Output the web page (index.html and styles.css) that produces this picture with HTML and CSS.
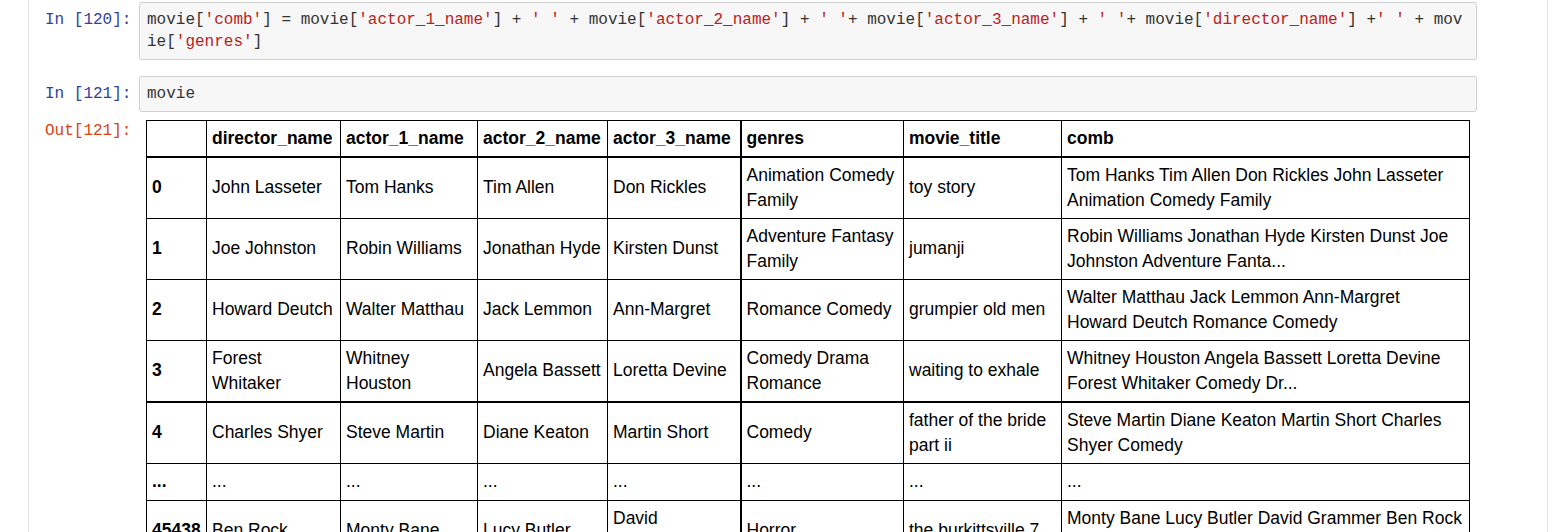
FILE: index.html
```html
<!DOCTYPE html>
<html>
<head>
<meta charset="utf-8">
<link rel="stylesheet" href="styles.css">
</head>
<body>
<div class="nb">
  <div class="cell">
    <div class="prompt prompt-in">In [120]:</div>
    <div class="input"><pre class="code">movie[<span class="str">'comb'</span>] = movie[<span class="str">'actor_1_name'</span>] + <span class="str">' '</span> + movie[<span class="str">'actor_2_name'</span>] + <span class="str">' '</span>+ movie[<span class="str">'actor_3_name'</span>] + <span class="str">' '</span>+ movie[<span class="str">'director_name'</span>] +<span class="str">' '</span> + mov
ie[<span class="str">'genres'</span>]</pre></div>
  </div>
  <div class="cell cell-gap">
    <div class="prompt prompt-in">In [121]:</div>
    <div class="input"><pre class="code">movie</pre></div>
  </div>
  <div class="cell cell-out">
    <div class="prompt prompt-out">Out[121]:</div>
    <div class="output">
      <table class="df">
        <colgroup>
          <col class="c-idx">
          <col class="c-dir">
          <col class="c-a1">
          <col class="c-a2">
          <col class="c-a3">
          <col class="c-gen">
          <col class="c-title">
          <col class="c-comb">
        </colgroup>
        <thead>
          <tr><th></th><th>director_name</th><th>actor_1_name</th><th>actor_2_name</th><th class="thick-r">actor_3_name</th><th>genres</th><th>movie_title</th><th>comb</th></tr>
        </thead>
        <tbody>
          <tr><th>0</th><td>John Lasseter</td><td>Tom Hanks</td><td>Tim Allen</td><td class="thick-r">Don Rickles</td><td>Animation Comedy<br>Family</td><td>toy story</td><td>Tom Hanks Tim Allen Don Rickles John Lasseter<br>Animation Comedy Family</td></tr>
          <tr><th>1</th><td>Joe Johnston</td><td>Robin Williams</td><td>Jonathan Hyde</td><td class="thick-r">Kirsten Dunst</td><td>Adventure Fantasy<br>Family</td><td>jumanji</td><td>Robin Williams Jonathan Hyde Kirsten Dunst Joe<br>Johnston Adventure Fanta...</td></tr>
          <tr><th>2</th><td>Howard Deutch</td><td>Walter Matthau</td><td>Jack Lemmon</td><td class="thick-r">Ann-Margret</td><td>Romance Comedy</td><td>grumpier old men</td><td>Walter Matthau Jack Lemmon Ann-Margret<br>Howard Deutch Romance Comedy</td></tr>
          <tr class="thick-b"><th>3</th><td>Forest<br>Whitaker</td><td>Whitney<br>Houston</td><td>Angela Bassett</td><td class="thick-r">Loretta Devine</td><td>Comedy Drama<br>Romance</td><td>waiting to exhale</td><td>Whitney Houston Angela Bassett Loretta Devine<br>Forest Whitaker Comedy Dr...</td></tr>
          <tr><th>4</th><td>Charles Shyer</td><td>Steve Martin</td><td>Diane Keaton</td><td class="thick-r">Martin Short</td><td>Comedy</td><td>father of the bride<br>part ii</td><td>Steve Martin Diane Keaton Martin Short Charles<br>Shyer Comedy</td></tr>
          <tr><th>...</th><td>...</td><td>...</td><td>...</td><td class="thick-r">...</td><td>...</td><td>...</td><td>...</td></tr>
          <tr><th>45438</th><td>Ben Rock</td><td>Monty Bane</td><td>Lucy Butler</td><td class="thick-r">David<br>Grammer</td><td>Horror</td><td>the burkittsville 7</td><td>Monty Bane Lucy Butler David Grammer Ben Rock<br>Horror</td></tr>
        </tbody>
      </table>
    </div>
  </div>
</div>
</body>
</html>
```

FILE: styles.css
```css
html, body {
  margin: 0;
  padding: 0;
  background: #ffffff;
  overflow: hidden;
}

.nb {
  margin-left: 28px;
  width: 1520px;
  box-sizing: border-box;
  border-left: 1px solid #dfe2e7;
  border-right: 1px solid #dfe2e7;
  padding: 2px 70px 0 0;
  min-height: 900px;
}

.cell {
  display: flex;
  align-items: flex-start;
}

.cell-gap {
  margin-top: 16px;
}

.cell-out {
  margin-top: 7px;
}

.prompt {
  flex: 0 0 110px;
  box-sizing: border-box;
  text-align: right;
  padding-right: 7.6px;
  font-family: "Liberation Mono", "DejaVu Sans Mono", monospace;
  font-size: 16px;
  line-height: 22px;
}

.prompt-in {
  padding-top: 7px;
  color: #303f9f;
}

.prompt-out {
  padding-top: 1px;
  color: #d84315;
}

.input {
  flex: 1 1 auto;
  background: #f7f7f7;
  border: 1px solid #cfcfcf;
  border-radius: 3px;
  padding: 6px 7px;
}

.code {
  margin: 0;
  font-family: "Liberation Mono", "DejaVu Sans Mono", monospace;
  font-size: 16px;
  line-height: 22px;
  color: #333333;
  white-space: pre;
}

.code .str {
  color: #ba2121;
}

.output {
  flex: 1 1 auto;
  padding: 1px 0 0 7px;
}

.df {
  table-layout: fixed;
  width: 1323px;
  border-collapse: collapse;
  font-family: "Liberation Sans", Arial, sans-serif;
  font-size: 17.5px;
  color: #000000;
}

.c-idx { width: 60px; }
.c-dir { width: 134px; }
.c-a1 { width: 137px; }
.c-a2 { width: 130px; }
.c-a3 { width: 133px; }
.c-gen { width: 163px; }
.c-title { width: 158px; }
.c-comb { width: 408px; }

.df th,
.df td {
  border: 1px solid #000000;
  padding: 5px 5px 6px 5px;
  line-height: 24.5px;
  text-align: left;
  vertical-align: middle;
  white-space: nowrap;
  overflow: hidden;
}

.df th {
  font-weight: bold;
}

.df thead th {
  border-bottom: 2px solid #000000;
  padding-bottom: 5.5px;
}

.df .thick-r {
  border-right: 2px solid #000000;
}

.df tr.thick-b th,
.df tr.thick-b td {
  border-bottom: 2px solid #000000;
}
```
